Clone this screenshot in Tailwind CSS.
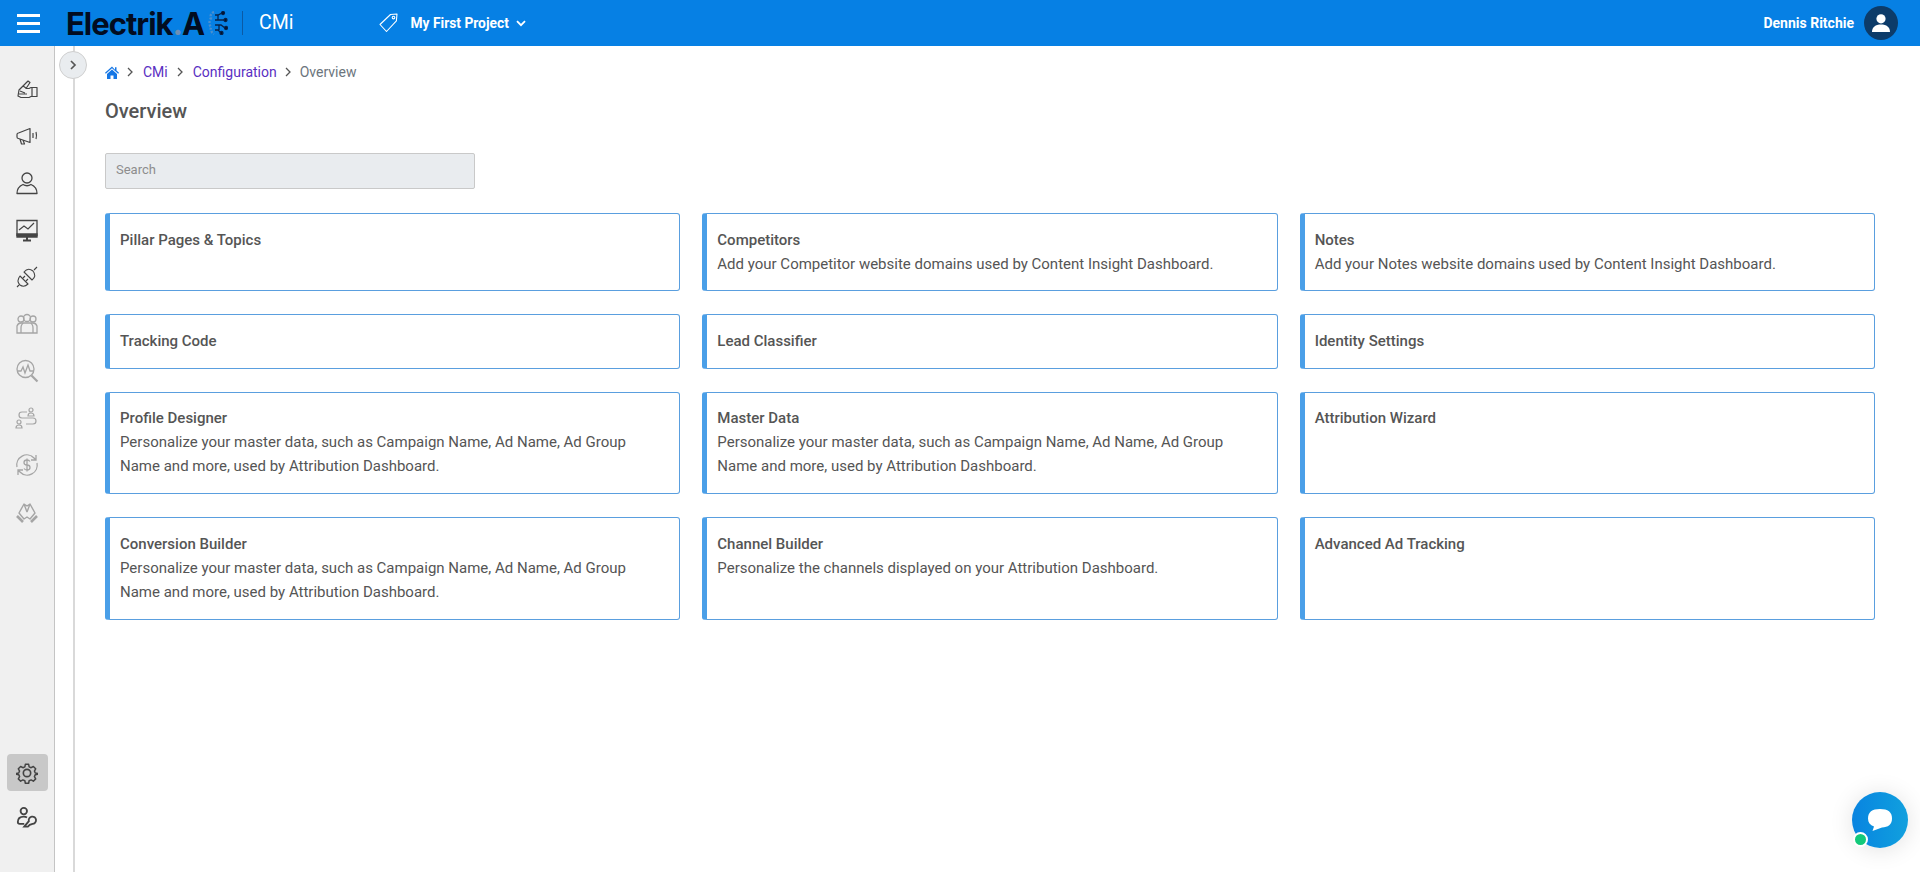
<!DOCTYPE html>
<html lang="en">
<head>
    <meta charset="UTF-8">
    <meta name="viewport" content="width=device-width, initial-scale=1.0">
    <title>Overview</title>
    <script src="https://cdn.jsdelivr.net/npm/@tailwindcss/browser@4"></script>
</head>
<body class="h-[872px] overflow-hidden bg-white font-['Roboto',sans-serif] text-[#555]">
    <!-- Top bar -->
    <header class="h-[46px] bg-[#0680e4] flex items-center text-white">
        <button class="w-[54px] flex flex-col items-center gap-[5px] pl-[3px]">
            <span class="block w-[23px] h-[3px] bg-white"></span>
            <span class="block w-[23px] h-[3px] bg-white"></span>
            <span class="block w-[23px] h-[3px] bg-white"></span>
        </button>
        <div class="flex items-center ml-[12px] w-[176px] shrink-0">
            <span class="font-['Inter',sans-serif] font-bold text-[31px] leading-none tracking-[-1px] text-[#020c20]">Electrik<span class="text-[#6d8fb5]">.</span>A</span>
            <svg class="w-[20px] h-[24px] ml-[4px] shrink-0" viewBox="0 0 20 24" fill="none" stroke="#06224a" stroke-width="1.300">
                <path d="M6 1C3 2 2 5 3 7 1 10 1 14 3 16c-1 3 1 6 3 7" stroke="#4a8fd0" stroke-width="2.400" stroke-dasharray="2 1.500"/>
                <path d="M7 4h3l4-2M7 9h9M7 14h6l4 3M7 19h3l3 3M10 4v5M11 14v5"/>
                <circle cx="15" cy="2" r="1.500" fill="#020c20"/>
                <circle cx="17.500" cy="9" r="1.500" fill="#020c20"/>
                <circle cx="18" cy="17" r="1.500" fill="#020c20"/>
                <circle cx="13.500" cy="22" r="1.500" fill="#020c20"/>
            </svg>
        </div>
        <span class="w-[1px] h-[24px] bg-[#0b5aa5]"></span>
        <span class="ml-[16px] text-[19.500px] leading-none">CMi</span>
        <svg class="w-[20px] h-[20px] ml-[86px]" viewBox="0 0 20 20" fill="none" stroke="white" stroke-width="1.100" stroke-linejoin="round">
            <path d="M1 11.500 11.500 1.500l6.500-.5-.6 6.800L7.500 18.500z"/>
            <circle cx="14.500" cy="4.600" r="1.300"/>
        </svg>
        <span class="ml-[11px] text-[13.800px] font-bold">My First Project</span>
        <svg class="w-[10px] h-[7px] ml-[7px]" viewBox="0 0 10 7" fill="none" stroke="white" stroke-width="1.800"><path d="m1 1.200 4 4 4-4"/></svg>
        <span class="ml-auto text-[14px] font-bold">Dennis Ritchie</span>
        <span class="ml-[10px] mr-[22px] w-[34px] h-[34px] rounded-full bg-[#0c3b69] flex items-center justify-center">
            <svg class="w-[20px] h-[20px]" viewBox="0 0 20 20" fill="white">
                <circle cx="10" cy="5.800" r="4.600"/>
                <path d="M1 19c0-5 3.500-7.500 9-7.500s9 2.500 9 7.500z"/>
            </svg>
        </span>
    </header>

    <div class="flex h-[826px]">
        <!-- Sidebar -->
        <aside class="w-[55px] shrink-0 h-full bg-[#f0f0f0] border-r border-[#c4c4c4] flex flex-col items-center pt-[31px] pb-[43px]">
            <div class="flex flex-col items-center gap-[23px] text-[#444]">
                <svg class="w-[24px] h-[24px]" viewBox="0 0 24 24" fill="none" stroke="currentColor" stroke-width="1.200" stroke-linejoin="round"><path d="M3 19l1-6 9-9 2 1.500-4 6h3l2-1h6v9h-6l-2 1H6zM17 10.500v9M5 14l5 2M4 17h8M8 9l3 2"/></svg>
                <svg class="w-[24px] h-[24px]" viewBox="0 0 24 24" fill="none" stroke="currentColor" stroke-width="1.200" stroke-linejoin="round"><path d="M2 10.500q0-1.500 1.500-1.500L15 4.500v14L3.500 14.500Q2 14.500 2 13zM5 15l1.500 5h3L8 16M18 9v5M21 8q1 3.500 0 7"/></svg>
                <svg class="w-[24px] h-[24px]" viewBox="0 0 24 24" fill="none" stroke="currentColor" stroke-width="1.300" stroke-linejoin="round"><circle cx="12" cy="7" r="5"/><path d="M2 22.500q0-6.500 6-9 4 2.500 8 0 6 2.500 6 9z"/></svg>
                <svg class="w-[24px] h-[24px]" viewBox="0 0 24 24" fill="none" stroke="currentColor" stroke-width="1.300"><path d="M2 2.500h20v15H2z"/><path d="M4 12l5-4 4 3 6-6" stroke-width="1.200"/><path d="M2 16h20v3H2z" fill="currentColor"/><path d="M8 22.500h8M12 19v3" stroke-width="2"/></svg>
                <svg class="w-[24px] h-[24px]" viewBox="0 0 24 24" fill="none" stroke="currentColor" stroke-width="1.100" stroke-linejoin="round"><path d="M9 7l8 8q5-4 1-9-5-4-9 1zM19 5l3-3M10 11l-2 2M13 14l-2 2"/><path d="M5 11l8 8q-4 4-8 1-4-4 0-9zM4 20l-2 2"/></svg>
            </div>
            <div class="flex flex-col items-center gap-[23px] text-[#a5a5a5] mt-[23px]">
                <svg class="w-[24px] h-[24px]" viewBox="0 0 24 24" fill="none" stroke="currentColor" stroke-width="1.300"><circle cx="12" cy="6" r="3.500"/><circle cx="6" cy="7" r="3"/><circle cx="18" cy="7" r="3"/><path d="M2 21v-7q1-3 4-3h12q3 0 4 3v7zM6 21v-5q0-4 3-5M18 21v-5q0-4-3-5"/></svg>
                <svg class="w-[24px] h-[24px]" viewBox="0 0 24 24" fill="none" stroke="currentColor" stroke-width="1.300"><circle cx="10.500" cy="10" r="8.500"/><path d="M3 12h3l2-4 2 6 3-8 2 6h3"/><path d="m16.500 16.500 6 6" stroke-width="2.200"/></svg>
                <svg class="w-[24px] h-[24px]" viewBox="0 0 24 24" fill="none" stroke="currentColor" stroke-width="1.200"><circle cx="16" cy="4" r="2"/><path d="M13 10q0-3 3-3t3 3zM12 6H7q-3 0-3 3t3 3h11q3 0 3 3t-3 3h-7"/><circle cx="4" cy="16" r="2"/><path d="M1 22q0-3 3-3t3 3z"/></svg>
                <svg class="w-[24px] h-[24px]" viewBox="0 0 24 24" fill="none" stroke="currentColor" stroke-width="1.300"><path d="M2 14a10 10 0 0 1 17-9l2 2M22 10a10 10 0 0 1-17 9l-2-2M21 2v5h-5M3 22v-5h5"/><path d="M15 8.500q-1-1.500-3-1.500-3 0-3 2.500t3 2.500 3 2.500-3 2.500q-2 0-3-1.500M12 5.500v13"/></svg>
                <svg class="w-[24px] h-[24px]" viewBox="0 0 24 24" fill="none" stroke="currentColor" stroke-width="1.400" stroke-linejoin="round"><path d="M4 13 9 4l3 2 3-2 5 9-5 6-3-2-3 2zM9 4l3 8M15 4l-3 8"/><path d="m2 16 6 6M22 16l-6 6" stroke-width="2.600"/></svg>
            </div>
            <div class="mt-auto flex flex-col items-center gap-[15px] text-[#444]">
                <div class="w-[41px] h-[37px] rounded-[4px] bg-[#c8c8c8] flex items-center justify-center">
                    <svg class="w-[22px] h-[22px]" viewBox="0 0 24 24" fill="none" stroke="currentColor" stroke-width="1.800" stroke-linejoin="round"><circle cx="12" cy="12" r="4"/><path d="M10 1.500h4l.6 3 2.400 1.100 2.700-1.500 2.800 2.800-1.500 2.700 1 2.400 3 .6v.8l-3 .6-1 2.400 1.500 2.700-2.800 2.800-2.700-1.500-2.400 1-.6 3h-4l-.6-3-2.400-1-2.700 1.500-2.800-2.800 1.500-2.700-1-2.400-3-.6v-.8l3-.6 1-2.400-1.500-2.700 2.800-2.800 2.700 1.500 2.400-1.100z" transform="translate(1.200 1.200) scale(.9)"/></svg>
                </div>
                <svg class="w-[22px] h-[23px]" viewBox="0 0 24 24" fill="none" stroke="currentColor" stroke-width="2"><circle cx="8.500" cy="5" r="3.500"/><path d="M2 17q0-6 6.500-6 2 0 3.500 1M2 17q0 2 2 2h5"/><path d="m9 22 5-6a4 4 0 1 1 4 3l-3 1-2 2z"/></svg>
            </div>
        </aside>

        <!-- Thin rail with collapse button -->
        <div class="relative w-[20px] shrink-0 h-full border-r-2 border-[#d9d9d9]">
            <button class="absolute left-[4px] top-[5px] w-[28px] h-[28px] rounded-full bg-[#e9ecef] border border-[#cfcfcf] flex items-center justify-center">
                <svg class="w-[7px] h-[10px]" viewBox="0 0 7 10" fill="none" stroke="#555" stroke-width="1.700"><path d="m1 1 4 4-4 4"/></svg>
            </button>
        </div>

        <!-- Main content -->
        <main class="flex-1 pl-[30px] pr-[45px] pt-[16px]">
            <nav class="flex items-center text-[14px] leading-[20px]">
                <svg class="w-[14px] h-[13px]" viewBox="0 0 14 13" fill="#1677e5"><path d="M7 .5 0 6.800l.8.9L7 2.200l6.200 5.500.8-.9-2.500-2.200V1.200H10v2.500zM2 8v5h3.500V9.500h3V13H12V8L7 3.500z"/></svg>
                <svg class="w-[7px] h-[10px] ml-[8px] mr-[9px]" viewBox="0 0 7 10" fill="none" stroke="#555" stroke-width="1.300"><path d="m1 1 4 4-4 4"/></svg>
                <a class="text-[#5a2fc2]">CMi</a>
                <svg class="w-[7px] h-[10px] ml-[9px] mr-[9px]" viewBox="0 0 7 10" fill="none" stroke="#555" stroke-width="1.300"><path d="m1 1 4 4-4 4"/></svg>
                <a class="text-[#5a2fc2]">Configuration</a>
                <svg class="w-[7px] h-[10px] ml-[8px] mr-[8px]" viewBox="0 0 7 10" fill="none" stroke="#555" stroke-width="1.300"><path d="m1 1 4 4-4 4"/></svg>
                <span class="text-[#6c757d]">Overview</span>
            </nav>
            <h1 class="mt-[16px] text-[20px] leading-[26px] font-medium text-[#555]">Overview</h1>
            <input type="text" placeholder="Search" class="block mt-[29px] w-[370px] h-[36px] px-[10px] pb-[3px] text-[13px] bg-[#e9ecef] border border-[#c9c9c9] rounded-[2px] placeholder:text-[#8d8d8d]">

            <!-- Cards -->
            <div class="mt-[24px] grid grid-cols-3 gap-x-[22px] gap-y-[23px] text-[15px] leading-[24px]">
                <div class="h-[78px] border border-[#5a9fdf] border-l-[5px] border-l-[#4a9fe8] rounded-[3px] pl-[10px] pr-[24px] pt-[14px]">
                    <h3 class="font-medium">Pillar Pages &amp; Topics</h3>
                </div>
                <div class="h-[78px] border border-[#5a9fdf] border-l-[5px] border-l-[#4a9fe8] rounded-[3px] pl-[10px] pr-[24px] pt-[14px]">
                    <h3 class="font-medium">Competitors</h3>
                    <p>Add your Competitor website domains used by Content Insight Dashboard.</p>
                </div>
                <div class="h-[78px] border border-[#5a9fdf] border-l-[5px] border-l-[#4a9fe8] rounded-[3px] pl-[10px] pr-[24px] pt-[14px]">
                    <h3 class="font-medium">Notes</h3>
                    <p>Add your Notes website domains used by Content Insight Dashboard.</p>
                </div>

                <div class="h-[55px] border border-[#5a9fdf] border-l-[5px] border-l-[#4a9fe8] rounded-[3px] pl-[10px] pr-[24px] pt-[14px]">
                    <h3 class="font-medium">Tracking Code</h3>
                </div>
                <div class="h-[55px] border border-[#5a9fdf] border-l-[5px] border-l-[#4a9fe8] rounded-[3px] pl-[10px] pr-[24px] pt-[14px]">
                    <h3 class="font-medium">Lead Classifier</h3>
                </div>
                <div class="h-[55px] border border-[#5a9fdf] border-l-[5px] border-l-[#4a9fe8] rounded-[3px] pl-[10px] pr-[24px] pt-[14px]">
                    <h3 class="font-medium">Identity Settings</h3>
                </div>

                <div class="h-[102px] border border-[#5a9fdf] border-l-[5px] border-l-[#4a9fe8] rounded-[3px] pl-[10px] pr-[24px] pt-[13px]">
                    <h3 class="font-medium">Profile Designer</h3>
                    <p>Personalize your master data, such as Campaign Name, Ad Name, Ad Group Name and more, used by Attribution Dashboard.</p>
                </div>
                <div class="h-[102px] border border-[#5a9fdf] border-l-[5px] border-l-[#4a9fe8] rounded-[3px] pl-[10px] pr-[24px] pt-[13px]">
                    <h3 class="font-medium">Master Data</h3>
                    <p>Personalize your master data, such as Campaign Name, Ad Name, Ad Group Name and more, used by Attribution Dashboard.</p>
                </div>
                <div class="h-[102px] border border-[#5a9fdf] border-l-[5px] border-l-[#4a9fe8] rounded-[3px] pl-[10px] pr-[24px] pt-[13px]">
                    <h3 class="font-medium">Attribution Wizard</h3>
                </div>

                <div class="h-[103px] border border-[#5a9fdf] border-l-[5px] border-l-[#4a9fe8] rounded-[3px] pl-[10px] pr-[24px] pt-[14px]">
                    <h3 class="font-medium">Conversion Builder</h3>
                    <p>Personalize your master data, such as Campaign Name, Ad Name, Ad Group Name and more, used by Attribution Dashboard.</p>
                </div>
                <div class="h-[103px] border border-[#5a9fdf] border-l-[5px] border-l-[#4a9fe8] rounded-[3px] pl-[10px] pr-[24px] pt-[14px]">
                    <h3 class="font-medium">Channel Builder</h3>
                    <p>Personalize the channels displayed on your Attribution Dashboard.</p>
                </div>
                <div class="h-[103px] border border-[#5a9fdf] border-l-[5px] border-l-[#4a9fe8] rounded-[3px] pl-[10px] pr-[24px] pt-[14px]">
                    <h3 class="font-medium">Advanced Ad Tracking</h3>
                </div>
            </div>
        </main>
    </div>

    <!-- Chat bubble -->
    <div class="fixed left-[1852px] top-[792px] w-[56px] h-[56px] rounded-full bg-gradient-to-r from-[#0a84e0] to-[#12a0de] shadow-[0_2px_24px_rgba(0,0,0,0.12)] flex items-center justify-center">
        <svg class="w-[26px] h-[26px]" viewBox="0 0 26 26" fill="white"><path d="M13 2c8 0 12 3 12 9.500S21 20 15 20.500L5.500 24l1.500-4.500C3 18 1 15.500 1 11.500 1 5 5 2 13 2z"/></svg>
        <span class="absolute left-[1px] bottom-[1px] w-[15px] h-[15px] rounded-full bg-[#12c97a] border-2 border-white"></span>
    </div>
</body>
</html>
